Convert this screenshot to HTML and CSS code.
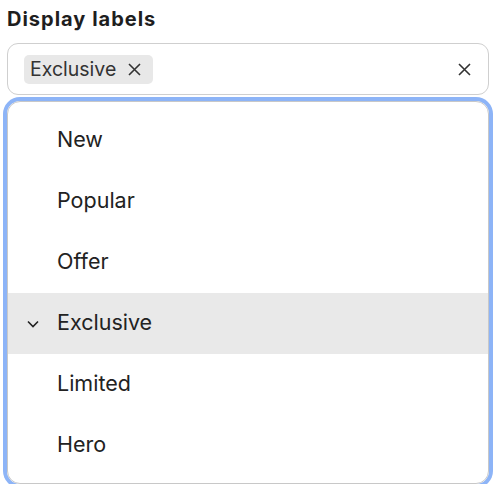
FILE: index.html
```html
<!DOCTYPE html>
<html>
<head>
<meta charset="utf-8">
<link rel="stylesheet" href="styles.css">
</head>
<body>
<div class="field">
  <div class="label">Display labels</div>
  <div class="control">
    <div class="values">
      <span class="tag">Exclusive
        <svg class="tag-x" width="13" height="13" viewBox="0 0 13 13"><path d="M1 1L12 12M12 1L1 12" stroke="#333" stroke-width="1.6" fill="none"/></svg>
      </span>
    </div>
    <svg class="clear" width="13" height="13" viewBox="0 0 13 13"><path d="M1 1L12 12M12 1L1 12" stroke="#333" stroke-width="1.6" fill="none"/></svg>
  </div>
  <ul class="menu">
    <li class="opt"><span class="chk"></span>New</li>
    <li class="opt"><span class="chk"></span>Popular</li>
    <li class="opt"><span class="chk"></span>Offer</li>
    <li class="opt sel"><span class="chk"><svg width="12" height="8" viewBox="0 0 12 8"><path d="M1 1.5L6 6.5L11 1.5" stroke="#222" stroke-width="1.6" fill="none"/></svg></span>Exclusive</li>
    <li class="opt"><span class="chk"></span>Limited</li>
    <li class="opt"><span class="chk"></span>Hero</li>
  </ul>
</div>
</body>
</html>
```
FILE: styles.css
```css
html, body {
  margin: 0;
  padding: 0;
  background: #fff;
}
body {
  font-family: Inter, "Noto Sans", sans-serif;
  color: #222;
  overflow: hidden;
}
.field {
  padding: 6px 12px 0 7px;
}
.label {
  font-size: 20px;
  font-weight: 700;
  letter-spacing: 1px;
  line-height: 26px;
  color: #1e1e1e;
}
.control {
  margin-top: 11px;
  height: 50px;
  border: 1px solid #cfcfcf;
  border-radius: 11px;
  display: flex;
  align-items: center;
  padding: 0 17px 0 16px;
}
.values {
  flex: 1;
  display: flex;
}
.tag {
  display: inline-flex;
  align-items: center;
  gap: 12px;
  background: #e8e8e8;
  border-radius: 5px;
  height: 29px;
  padding: 0 12px 0 6px;
  font-size: 19.5px;
  color: #333;
}
.menu {
  list-style: none;
  margin: 6px 0 0 0;
  padding: 8px 0 7px;
  border: 1px solid #c8c8c8;
  border-radius: 13px;
  box-shadow: 0 0 0 4px #8db4f7;
}
.opt {
  height: 61px;
  box-sizing: border-box;
  padding-bottom: 3px;
  display: flex;
  align-items: center;
  font-size: 21.5px;
  color: #222;
}
.opt.sel {
  background: #e9e9e9;
}
.chk {
  width: 49px;
  display: flex;
  justify-content: flex-end;
  box-sizing: border-box;
  padding-top: 3px;
}
.chk svg {
  margin-right: 18px;
}
```
